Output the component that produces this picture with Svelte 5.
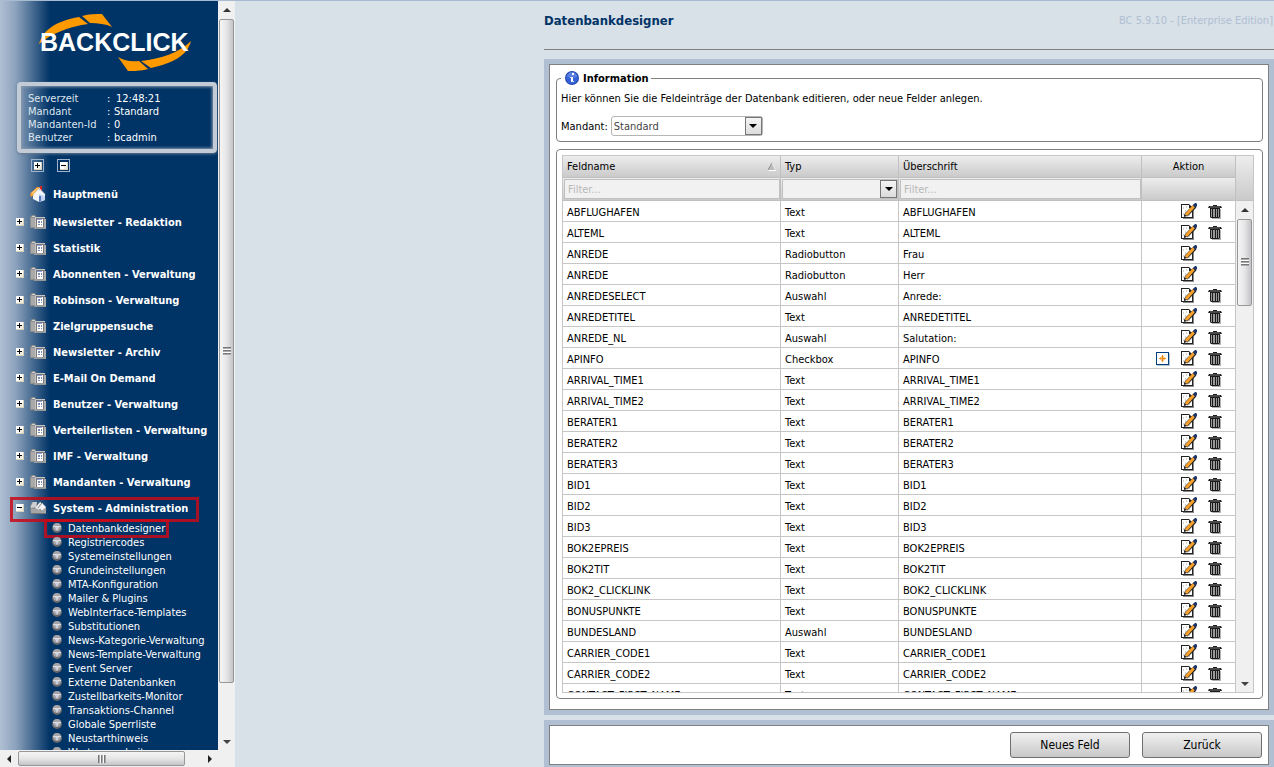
<script lang="ts">
  const server = [
    { label: 'Serverzeit', value: '12:48:21' },
    { label: 'Mandant', value: 'Standard' },
    { label: 'Mandanten-Id', value: '0' },
    { label: 'Benutzer', value: 'bcadmin' },
  ];

  const menu = [
    'Newsletter - Redaktion',
    'Statistik',
    'Abonnenten - Verwaltung',
    'Robinson - Verwaltung',
    'Zielgruppensuche',
    'Newsletter - Archiv',
    'E-Mail On Demand',
    'Benutzer - Verwaltung',
    'Verteilerlisten - Verwaltung',
    'IMF - Verwaltung',
    'Mandanten - Verwaltung',
  ];

  const submenu = [
    'Datenbankdesigner',
    'Registriercodes',
    'Systemeinstellungen',
    'Grundeinstellungen',
    'MTA-Konfiguration',
    'Mailer & Plugins',
    'WebInterface-Templates',
    'Substitutionen',
    'News-Kategorie-Verwaltung',
    'News-Template-Verwaltung',
    'Event Server',
    'Externe Datenbanken',
    'Zustellbarkeits-Monitor',
    'Transaktions-Channel',
    'Globale Sperrliste',
    'Neustarthinweis',
    'Wartungsarbeiten',
  ];

  type Field = { name: string; type: string; title: string; fixed?: boolean; add?: boolean };

  const fields: Field[] = [
    { name: 'ABFLUGHAFEN', type: 'Text', title: 'ABFLUGHAFEN' },
    { name: 'ALTEML', type: 'Text', title: 'ALTEML' },
    { name: 'ANREDE', type: 'Radiobutton', title: 'Frau', fixed: true },
    { name: 'ANREDE', type: 'Radiobutton', title: 'Herr', fixed: true },
    { name: 'ANREDESELECT', type: 'Auswahl', title: 'Anrede:' },
    { name: 'ANREDETITEL', type: 'Text', title: 'ANREDETITEL' },
    { name: 'ANREDE_NL', type: 'Auswahl', title: 'Salutation:' },
    { name: 'APINFO', type: 'Checkbox', title: 'APINFO', add: true },
    { name: 'ARRIVAL_TIME1', type: 'Text', title: 'ARRIVAL_TIME1' },
    { name: 'ARRIVAL_TIME2', type: 'Text', title: 'ARRIVAL_TIME2' },
    { name: 'BERATER1', type: 'Text', title: 'BERATER1' },
    { name: 'BERATER2', type: 'Text', title: 'BERATER2' },
    { name: 'BERATER3', type: 'Text', title: 'BERATER3' },
    { name: 'BID1', type: 'Text', title: 'BID1' },
    { name: 'BID2', type: 'Text', title: 'BID2' },
    { name: 'BID3', type: 'Text', title: 'BID3' },
    { name: 'BOK2EPREIS', type: 'Text', title: 'BOK2EPREIS' },
    { name: 'BOK2TIT', type: 'Text', title: 'BOK2TIT' },
    { name: 'BOK2_CLICKLINK', type: 'Text', title: 'BOK2_CLICKLINK' },
    { name: 'BONUSPUNKTE', type: 'Text', title: 'BONUSPUNKTE' },
    { name: 'BUNDESLAND', type: 'Auswahl', title: 'BUNDESLAND' },
    { name: 'CARRIER_CODE1', type: 'Text', title: 'CARRIER_CODE1' },
    { name: 'CARRIER_CODE2', type: 'Text', title: 'CARRIER_CODE2' },
    { name: 'CONTACT_FIRST_NAME', type: 'Text', title: 'CONTACT_FIRST_NAME' },
  ];
</script>

{#snippet toggle(open: boolean)}
  <svg class="toggle" viewBox="0 0 8 8" width="8" height="8" shape-rendering="crispEdges">
    <rect width="8" height="8" fill="#d6d0bc" />
    <rect width="7" height="7" fill="#fff" />
    <rect x="4" y="4" width="3" height="3" fill="#f0ecdc" />
    <rect x="1" y="3" width="5" height="1" fill="#000" />
    {#if !open}<rect x="3" y="1" width="1" height="5" fill="#000" />{/if}
  </svg>
{/snippet}

{#snippet arrow(dir: string)}
  <svg viewBox="0 0 8 8" width="8" height="8">
    {#if dir === 'up'}<path d="M0 6 4 2 8 6z" fill="#333" />{/if}
    {#if dir === 'down'}<path d="M0 2 4 6 8 2z" fill="#444" />{/if}
    {#if dir === 'left'}<path d="M6 0 2 4 6 8z" fill="#222" />{/if}
    {#if dir === 'right'}<path d="M2 0 6 4 2 8z" fill="#222" />{/if}
  </svg>
{/snippet}

<div class="page">
  <aside>
    <div class="nav-row">
      <div class="nav">
        <svg class="logo" viewBox="0 0 160 66" width="160" height="66" role="img" aria-label="Backclick">
          <path d="M3 30C7 16 20 7 43 3l9 7C31 13 15 20 3 30z" fill="#f90" />
          <path d="M46 2C53 0 60 0 66 0l10 13C70 10 62 9 54 9z" fill="#f90" />
          <path d="M155 27c-4 15-18 22-40 27l-10-7C125 45 144 38 155 27z" fill="#f90" />
          <path d="M112 55c-7 2-15 2-20 2L82 43c7 4 13 5 21 4z" fill="#f90" />
          <text x="4" y="37">BACKCLICK</text>
        </svg>

        <div class="server">
          <table>
            <tbody>
              {#each server as s, i}
                <tr>
                  <th scope="row">{s.label}</th>
                  <td class="colon">:</td>
                  <td class:clock={i === 0}>{s.value}</td>
                </tr>
              {/each}
            </tbody>
          </table>
        </div>

        <div class="tree-tools">
          <button aria-label="Alle öffnen">{@render toggle(false)}</button>
          <button aria-label="Alle schließen">{@render toggle(true)}</button>
        </div>

        <ul class="menu">
          <li class="home">
            <a href="#home">
              <svg viewBox="0 0 16 16" width="16" height="16">
                <path d="M10 0h2v5h-2z" fill="#d22" />
                <path d="M3 8l6-5 6 5v6l-6 2-6-3z" fill="#f4f8fe" />
                <path d="M9 8l6 2v4l-6 2z" fill="#c5d6f4" />
                <path d="M0 8l7-7h3L4 9 1 11z" fill="#fb9a2c" />
                <path d="M1 7l6-5h2L3 8z" fill="#ffc870" />
                <path d="M9 2l6 7M9 3l-6 6" fill="none" stroke="#e8e8ee" />
                <path d="M9 10h2v5l-2 1z" fill="#5577c0" />
              </svg>
              Hauptmenü
            </a>
          </li>
          {#each menu as item}
            <li>
              {@render toggle(false)}
              <span class="dot"></span>
              <a href="#menu">
                <svg viewBox="0 0 16 14" width="16" height="14">
                  <path d="M0 2l2-2h3l1 2h9v11H0z" fill="#8d8d8d" />
                  <path d="M1 3h4v9H1z" fill="#a9a9a9" />
                  <path d="M2 1h3v1H2z" fill="#d0d0d0" />
                  <path d="M5 2h10v11H5z" fill="#777" />
                  <path d="M5 2h10v1H5zM5 2h1v11H5z" fill="#c6c6c6" />
                  <path d="M7 4h6v8H7z" fill="#fff" />
                  <path d="M7 4h5v1H7z" fill="#8fa4dc" />
                  <path d="M8 6h2v2H8zM11 6h1v2h-1zM8 9h2v1H8zM11 9h1v1h-1z" fill="#7a8cb4" />
                  <path d="M6 12h10v2H3z" fill="#999" />
                  <path d="M14 4h2v9h-2z" fill="#aaa" />
                </svg>
                {item}
              </a>
            </li>
          {/each}
          <li class="open">
            {@render toggle(true)}
            <span class="dot"></span>
            <a href="#system">
              <svg viewBox="0 0 16 14" width="16" height="14">
                <path d="M0 5l2-4h5v5l9 0v7H1z" fill="#8f8f8f" />
                <path d="M1 5l2-4 4 0-1 5-5 1z" fill="#cfcfcf" />
                <path d="M5 7l5-6 3 2-4 6z" fill="#e8e8e8" />
                <path d="M9 6l3-4 4 4-4 4z" fill="#f4f4f4" />
                <path d="M8 7l4-5" stroke="#888" />
                <path d="M1 8h6l4 2 5-3v6H1z" fill="#a5a5a5" />
                <path d="M1 12h15v1H1z" fill="#777" />
              </svg>
              System - Administration
            </a>
          </li>
        </ul>

        <ul class="submenu">
          {#each submenu as item, i}
            <li class:marked={i === 0}>
              <svg viewBox="0 0 10 10" width="10" height="10">
                <circle cx="5" cy="5" r="5" fill="#66676b" />
                <circle cx="5" cy="4" r="4" fill="#a4a5aa" />
                <path d="M1 3h8v1H1z" fill="#dcdde2" />
                <path d="M3 4h4L5 8z" fill="#d0d2de" />
              </svg>
              <a href="#sub">{item}</a>
            </li>
          {/each}
        </ul>
      </div>
      <div class="vbar">
        <button aria-label="Nach oben">{@render arrow('up')}</button>
        <div class="track"><div class="thumb"><i class="grip"></i></div></div>
        <button aria-label="Nach unten">{@render arrow('down')}</button>
      </div>
    </div>
    <div class="hbar">
      <button aria-label="Nach links">{@render arrow('left')}</button>
      <div class="track"><div class="thumb"><i class="grip"></i></div></div>
      <button aria-label="Nach rechts">{@render arrow('right')}</button>
    </div>
  </aside>

  <main>
    <header>
      <h1>Datenbankdesigner</h1>
      <span>BC 5.9.10 - [Enterprise Edition]</span>
    </header>

    <section class="frame grow">
      <div class="sheet">
        <fieldset class="info">
          <legend>
            <svg viewBox="0 0 14 14" width="14" height="14">
              <circle cx="7" cy="7" r="7" fill="#2346ad" />
              <circle cx="7" cy="7" r="6" fill="#3562d6" />
              <path d="M2 6a5 5 0 0 1 10 0c-3 1-7 1-10 0z" fill="#5a80e2" />
              <path d="M7 2h2v2H7zM6 6h2v5H6z" fill="#fff" />
              <path d="M5 6h2v1H5zM6 10h3v1H6z" fill="#dfe8ff" />
            </svg>
            Information
          </legend>
          <p>Hier können Sie die Feldeinträge der Datenbank editieren, oder neue Felder anlegen.</p>
          <div class="client">
            <label for="client">Mandant:</label>
            <div class="select">
              <select id="client"><option>Standard</option></select>
              <span class="drop">{@render arrow('down')}</span>
            </div>
          </div>
        </fieldset>

        <div class="box">
          <div class="grid">
            <table class="head">
              <colgroup><col class="c1" /><col class="c2" /><col /><col class="c4" /><col class="c5" /></colgroup>
              <thead>
                <tr>
                  <th>
                    <div class="sorted">
                      Feldname
                      <svg viewBox="0 0 8 8" width="8" height="8">
                        <path d="M0 8h8L4 0z" fill="#fff" />
                        <path d="M0 7h7L4 1z" fill="#bbb" />
                        <path d="M0 7 4 0" stroke="#888" />
                      </svg>
                    </div>
                  </th>
                  <th>Typ</th>
                  <th>Überschrift</th>
                  <th class="action">Aktion</th>
                  <th rowspan="2" class="corner" aria-label="Bildlauf"></th>
                </tr>
                <tr class="filters">
                  <td><input placeholder="Filter..." aria-label="Feldname filtern" /></td>
                  <td>
                    <div class="select">
                      <select aria-label="Typ filtern"><option></option></select>
                      <span class="drop">{@render arrow('down')}</span>
                    </div>
                  </td>
                  <td><input placeholder="Filter..." aria-label="Überschrift filtern" /></td>
                  <td></td>
                </tr>
              </thead>
            </table>
            <div class="body">
              <div class="scroll">
                <table>
                  <colgroup><col class="c1" /><col class="c2" /><col /><col class="c4" /></colgroup>
                  <tbody>
                    {#each fields as f}
                      <tr>
                        <td>{f.name}</td>
                        <td>{f.type}</td>
                        <td>{f.title}</td>
                        <td class="tools">
                          <div class="actions">
                            {#if f.add}
                              <button aria-label="Hinzufügen">
                                <svg viewBox="0 0 16 16" width="16" height="16" shape-rendering="crispEdges">
                                  <path d="M2 3h13v13H2z" fill="#b8c4d0" />
                                  <path d="M1 2h13v13H1z" fill="#003e7e" />
                                  <path d="M2 3h11v11H2z" fill="#fff" />
                                  <path d="M7 5h1v3h3v1H8v3H7V9H4V8h3z" fill="#f08a10" />
                                  <path d="M6 6h3v5H6zM5 7h5v3H5z" fill="#f08a10" opacity=".5" />
                                </svg>
                              </button>
                            {/if}
                            <button aria-label="Bearbeiten">
                              <svg viewBox="0 0 16 16" width="16" height="16">
                                <path d="M2 3h11v13H2z" fill="#8a8a8a" />
                                <path d="M0 1h8l4 4v10H0z" fill="#222" />
                                <path d="M1 2h7v3h3v9H1z" fill="#fff" />
                                <path d="M2 5h1M4 8h1M2 11h1M8 12h1M5 4h1" stroke="#aaa" />
                                <path d="M5 12 14 3" stroke="#222" stroke-width="4" />
                                <path d="M5 12 13 3" stroke="#f7a02b" stroke-width="3" />
                                <path d="M12 2l2-2h1l1 1v2l-2 2z" fill="#1c3467" />
                                <path d="M3 14v-3l3 2z" fill="#222" />
                              </svg>
                            </button>
                            {#if f.fixed}
                              <span class="empty"></span>
                            {:else}
                              <button aria-label="Löschen">
                                <svg viewBox="0 0 16 16" width="16" height="16">
                                  <path d="M5 6h9v10H5z" fill="#b0b0b0" />
                                  <path d="M6 2h4v1h4l1 2H1l1-2h4z" fill="#1c1c1c" />
                                  <path d="M3 4h10" stroke="#777" />
                                  <path d="M3 5h10v9l-1 1H4l-1-1z" fill="#1c1c1c" />
                                  <path d="M4 6h1v8H4zM6 6h2v8H6zM9 6h1v8H9zM11 6h1v8h-1z" fill="#999" />
                                </svg>
                              </button>
                            {/if}
                          </div>
                        </td>
                      </tr>
                    {/each}
                  </tbody>
                </table>
              </div>
              <div class="vbar">
                <button aria-label="Liste nach oben">{@render arrow('up')}</button>
                <div class="track"><div class="thumb short"><i class="grip"></i></div></div>
                <button aria-label="Liste nach unten">{@render arrow('down')}</button>
              </div>
            </div>
          </div>
        </div>
      </div>
    </section>

    <section class="frame foot">
      <div class="sheet buttons">
        <button>Neues Feld</button>
        <button>Zurück</button>
      </div>
    </section>
  </main>
</div>

<style>
  :global(body) {
    background: #d8e0e8;
  }

  .page {
    display: flex;
    height: 100vh;
    box-sizing: border-box;
    border-top: 1px solid #a9bbd0;
    overflow: hidden;
    font-family: 'DejaVu Sans Condensed', 'DejaVu Sans', Tahoma, sans-serif;
    font-size: 11px;
    color: #000;
  }

  button,
  input,
  select {
    font: inherit;
    color: inherit;
    box-sizing: border-box;
    margin: 0;
  }

  a {
    color: inherit;
    text-decoration: none;
  }

  ul {
    list-style: none;
    margin: 0;
    padding: 0;
  }

  svg {
    display: block;
    flex: none;
  }

  /* sidebar */
  aside {
    flex: none;
    width: 235px;
    display: flex;
    flex-direction: column;
  }

  .nav-row {
    flex: 1;
    min-height: 0;
    display: flex;
  }

  .nav {
    flex: 1;
    min-width: 0;
    overflow: hidden;
    background: linear-gradient(90deg, #b0c0d4 0, #8ba1bb 16px, #003366 50px);
    color: #fff;
  }

  .logo {
    margin: 13px 0 2px 36px;
  }

  .logo text {
    font: bold 25px 'Liberation Sans', Arial, sans-serif;
    fill: #fff;
  }

  .server {
    height: 56px;
    margin: 0 1px 0 17px;
    padding: 6px 7px 1px;
    border: 4px solid #c3ccd6;
    border-radius: 4px;
    box-shadow: inset 0 0 3px 1px #8899ac, 0 1px 3px #667a90;
  }

  .server table {
    border-collapse: collapse;
    line-height: 13px;
  }

  .server th,
  .server td {
    padding: 0;
    font-weight: normal;
    text-align: left;
  }

  .server th {
    width: 79px;
    color: #dfe6ee;
  }

  .server .colon {
    width: 7px;
  }

  .server .clock {
    padding-left: 2px;
  }

  .tree-tools {
    display: flex;
    gap: 13px;
    padding: 6px 0 0 31px;
  }

  .tree-tools button {
    width: 13px;
    height: 13px;
    padding: 0;
    display: grid;
    place-items: center;
    background: none;
    border: 1px solid #9fb4cc;
  }

  .menu {
    font-weight: bold;
  }

  .menu li {
    position: relative;
    display: flex;
    align-items: center;
    height: 26px;
    padding-left: 16px;
  }

  .menu .home {
    height: 30px;
    padding: 7px 0 0 30px;
  }

  .menu a {
    display: flex;
    align-items: center;
    gap: 7px;
    white-space: nowrap;
  }

  .dot {
    width: 1px;
    height: 1px;
    margin: 0 3px 0 2px;
    background: #8899aa;
  }

  .submenu li {
    position: relative;
    display: flex;
    align-items: center;
    gap: 6px;
    height: 14px;
    padding-left: 52px;
    white-space: nowrap;
  }

  .open::after,
  .marked::after {
    content: '';
    position: absolute;
    border: 3px solid rgba(200, 10, 25, 0.85);
  }

  .open::after {
    inset: 2px 19px -1px 10px;
  }

  .marked::after {
    inset: -2px 49px -3px 44px;
  }

  /* scroll bars */
  .vbar,
  .hbar {
    flex: none;
    display: flex;
    background: #f0f0f0;
  }

  .vbar {
    width: 17px;
    flex-direction: column;
  }

  .hbar {
    height: 17px;
    padding-right: 17px;
  }

  .vbar button,
  .hbar button {
    width: 17px;
    height: 17px;
    padding: 0;
    border: 0;
    background: none;
    display: grid;
    place-items: center;
  }

  .track {
    flex: 1;
    min-height: 0;
    min-width: 0;
  }

  .thumb {
    box-sizing: border-box;
    border: 1px solid #979797;
    border-radius: 2px;
    display: grid;
    place-items: center;
  }

  .vbar .track {
    padding-top: 1px;
  }

  .vbar .thumb {
    height: 93%;
    margin: 0 1px;
    background: linear-gradient(90deg, #f5f5f5, #e6e6e8 50%, #c4c4c8);
  }

  .vbar .short {
    height: 19%;
  }

  .hbar .thumb {
    width: 91%;
    height: 15px;
    margin: 1px;
    background: linear-gradient(#f5f5f5, #e6e6e8 50%, #c4c4c8);
  }

  .grip {
    width: 8px;
    height: 8px;
    background: repeating-linear-gradient(#777 0 1px, #aaa 1px 2px, #fff 2px 3px);
  }

  .hbar .grip {
    background: repeating-linear-gradient(90deg, #777 0 1px, #aaa 1px 2px, #fff 2px 3px);
  }

  /* content */
  main {
    flex: 1;
    min-width: 0;
    margin-left: 309px;
    display: flex;
    flex-direction: column;
  }

  header {
    display: flex;
    justify-content: space-between;
    height: 48px;
    border-bottom: 1px solid #808080;
    margin-bottom: 9px;
    line-height: 40px;
    padding-right: 1px;
    color: #b0bfd2;
  }

  h1 {
    margin: 0;
    font-size: 13px;
    color: #003366;
  }

  .frame {
    display: flex;
    background: #b0bfd2;
    padding: 5px;
  }

  .grow {
    flex: 1;
    min-height: 0;
    margin-bottom: 5px;
  }

  .foot {
    padding-bottom: 2px;
  }

  .sheet {
    flex: 1;
    min-width: 0;
    display: flex;
    flex-direction: column;
    gap: 7px;
    padding: 5px 5px 10px 6px;
    background: #fff;
    border: 1px solid #808080;
  }

  .info {
    margin: 0;
    min-width: 0;
    padding: 0 4px 5px;
    border: 1px solid #808080;
    border-radius: 4px;
  }

  legend {
    display: flex;
    align-items: center;
    gap: 4px;
    height: 16px;
    padding: 0 2px 0 4px;
    font-weight: bold;
  }

  .info p {
    margin: 5px 0 9px;
    line-height: 16px;
  }

  .client {
    display: flex;
    align-items: center;
    gap: 3px;
  }

  .client .select {
    width: 152px;
    color: #444;
  }

  .select {
    position: relative;
  }

  select {
    display: block;
    width: 100%;
    height: 20px;
    padding: 0 20px 0 2px;
    appearance: none;
    background: #fff;
    border: 1px solid #b5b5b5;
    border-radius: 3px;
  }

  .drop {
    position: absolute;
    top: 1px;
    right: 1px;
    bottom: 1px;
    width: 17px;
    box-sizing: border-box;
    display: grid;
    place-items: center;
    border: 1px solid #777;
    background: linear-gradient(#f4f4f4, #dcdcdc);
    pointer-events: none;
  }

  .drop :global(path) {
    fill: #000;
  }

  .box {
    flex: 1;
    min-height: 0;
    display: flex;
    padding: 5px 8px 5px 5px;
    border: 1px solid #808080;
    border-radius: 4px;
  }

  .grid {
    flex: 1;
    min-width: 0;
    display: flex;
    flex-direction: column;
    border: 1px solid #c6c6c6;
  }

  .grid table {
    width: 100%;
    table-layout: fixed;
    border-collapse: separate;
    border-spacing: 0;
  }

  .c1 {
    width: 218px;
  }

  .c2 {
    width: 118px;
  }

  .c4 {
    width: 94px;
  }

  .c5 {
    width: 17px;
  }

  .head th,
  .head td {
    height: 22px;
    box-sizing: border-box;
    padding: 0 4px;
    border-right: 1px solid #c0c0c0;
    border-bottom: 1px solid #c0c0c0;
    background: linear-gradient(#ededed, #cacaca);
    font-weight: normal;
    text-align: left;
  }

  .head .action {
    text-align: center;
  }

  .head .corner {
    border-right: 0;
  }

  .sorted {
    display: flex;
    align-items: center;
    justify-content: space-between;
  }

  .head .filters td {
    height: 23px;
    padding: 1px 0 1px 1px;
  }

  .filters input,
  .filters select {
    display: block;
    width: 100%;
    height: 20px;
    padding: 0 3px;
    background: #f1f1f1;
    border: 1px solid #c0c0c0;
    border-radius: 0;
  }

  .filters input::placeholder {
    color: #b8b8b8;
    opacity: 1;
  }

  .body {
    flex: 1;
    min-height: 0;
    display: flex;
  }

  .scroll {
    flex: 1;
    min-width: 0;
    overflow: hidden;
  }

  .body td {
    box-sizing: border-box;
    height: 21px;
    padding: 2px 4px 0;
    border-right: 1px solid #c6c6c6;
    border-bottom: 1px solid #c6c6c6;
  }

  .body .tools {
    padding: 0;
  }

  .actions {
    display: flex;
    justify-content: flex-end;
    gap: 10px;
    padding-right: 12px;
  }

  .actions button {
    width: 16px;
    height: 16px;
    padding: 0;
    border: 0;
    background: none;
  }

  .empty {
    width: 16px;
  }

  .sheet.buttons {
    flex-direction: row;
    justify-content: flex-end;
    gap: 12px;
    padding: 6px;
  }

  .buttons button {
    width: 120px;
    height: 26px;
    padding: 0;
    font-size: 12px;
    border: 1px solid #707070;
    border-radius: 3px;
    background: linear-gradient(#f0f0f0, #c8c8c8);
  }
</style>
